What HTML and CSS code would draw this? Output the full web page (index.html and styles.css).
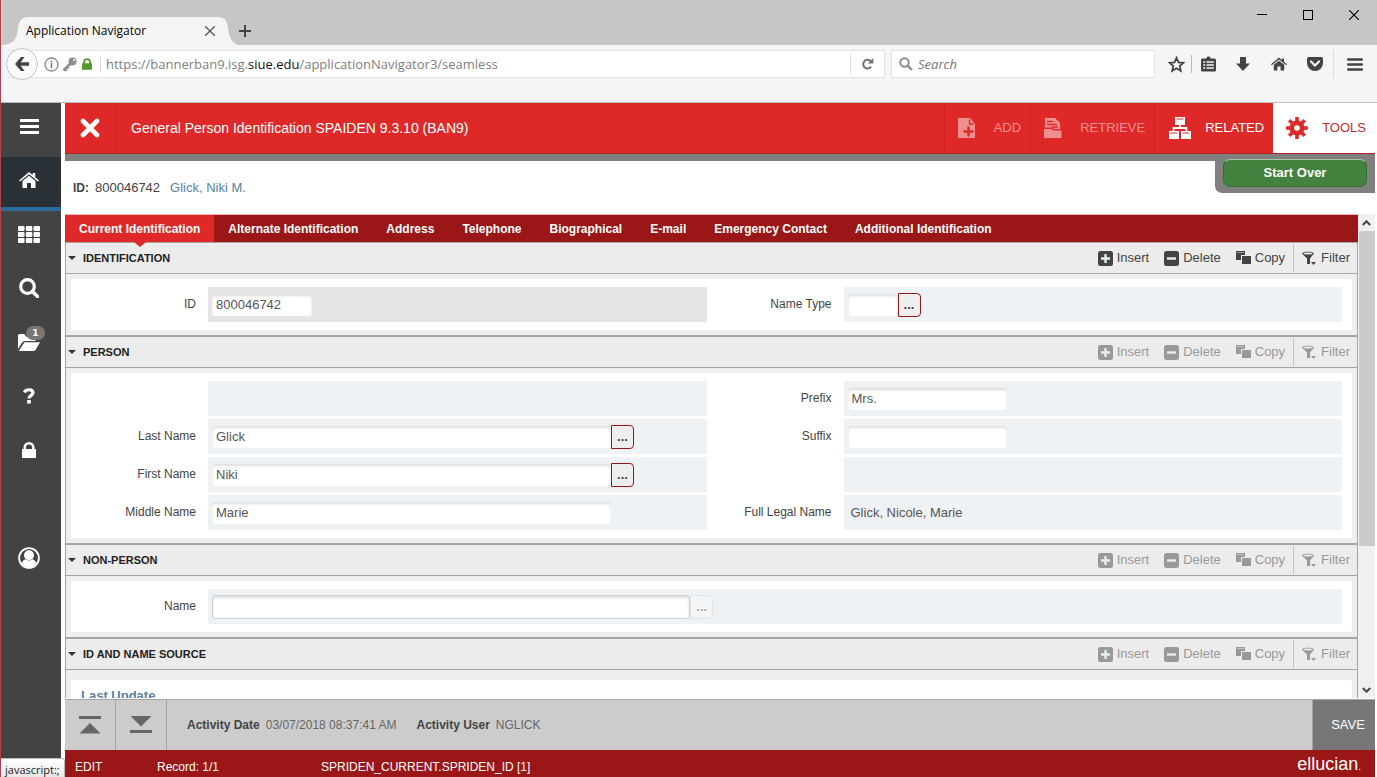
FILE: index.html
```html
<!DOCTYPE html>
<html lang="en">
<head>
<meta charset="utf-8">
<title>Application Navigator</title>
<link rel="stylesheet" href="styles.css">
</head>
<body>
<svg class="sprite" aria-hidden="true">
  <symbol id="i-insert" viewBox="0 0 15 15"><rect width="15" height="15" rx="2.5" fill="currentColor"/><path d="M7.5 3v9M3 7.5h9" stroke="#ececec" stroke-width="2.4"/></symbol>
  <symbol id="i-delete" viewBox="0 0 15 15"><rect width="15" height="15" rx="2.5" fill="currentColor"/><path d="M3 7.5h9" stroke="#ececec" stroke-width="2.4"/></symbol>
  <symbol id="i-copy" viewBox="0 0 15 15"><path d="M0 0h9v4H5v5H0zM6 5h9v8H6z" fill="currentColor"/><path d="M1 1.500h7" stroke="#ececec" stroke-width=".5"/></symbol>
  <symbol id="i-filter" viewBox="0 0 15 15"><path d="M0 2.500C0 .3 12 .3 12 2.500L8 7.500V13H5V7.500z" fill="currentColor"/><ellipse cx="6" cy="2.500" rx="4.500" ry=".9" fill="#ececec"/><path d="M9 11h5l-2.500 3z" fill="currentColor"/></symbol>
  <symbol id="i-lock" viewBox="0 0 14 16"><path d="M0 7h1.500V5.500a5.500 5.500 0 0 1 11 0V7H14v9H0zM4 7h6V5.500a3 3 0 0 0-6 0z" fill="currentColor"/></symbol>
  <symbol id="i-house" viewBox="0 0 20 16"><path d="M10 0l3.600 3V1h2.600v4.200L20 8.400l-1 1.200L10 2.300 1 9.600 0 8.400z" fill="currentColor"/><path d="M10 3.800l6.500 5.200v7H12v-5H8v5H3.500V9z" fill="currentColor"/></symbol>
</svg>
<div class="window">
  <header class="titlebar">
    <div class="tab">
      <svg class="tab-shape" viewBox="0 0 236 28" preserveAspectRatio="none" aria-hidden="true"><path d="M0 28C14 28 16 20 17 11C18 3 21 0 29 0H215C224 0 226 3 227 11C228 20 231 28 240 28z" fill="#f5f5f5"/></svg>
      <span class="tab-title">Application Navigator</span>
      <button class="plain" aria-label="Close tab"><svg width="10" height="10" viewBox="0 0 10 10"><path d="M0 0l10 10M10 0L0 10" stroke="#555" stroke-width="1.300"/></svg></button>
    </div>
    <button class="plain new-tab" aria-label="New tab"><svg width="12" height="12" viewBox="0 0 12 12"><path d="M6 0v12M0 6h12" stroke="#444" stroke-width="2"/></svg></button>
    <div class="window-controls">
      <button class="plain" aria-label="Minimize"><svg width="10" height="10"><path d="M0 4.500h10" stroke="#000"/></svg></button>
      <button class="plain" aria-label="Maximize"><svg width="10" height="10"><rect x=".5" y=".5" width="9" height="9" fill="none" stroke="#000"/></svg></button>
      <button class="plain" aria-label="Close"><svg width="10" height="10"><path d="M0 0l10 10M10 0L0 10" stroke="#000" stroke-width="1.200"/></svg></button>
    </div>
  </header>

  <div class="toolbar">
    <div class="address">
      <button class="plain back" aria-label="Back"><svg width="16" height="14" viewBox="0 0 16 14"><path d="M7 0h3.500L6.700 5.200H15v3.600H6.700L10.500 14H7L1 7z" fill="#444"/></svg></button>
      <svg class="ic-info" width="15" height="15" viewBox="0 0 15 15"><circle cx="7.500" cy="7.500" r="6.500" fill="none" stroke="#888" stroke-width="1.300"/><path d="M7.500 6v5.200M7.500 3.500v1.700" stroke="#777" stroke-width="1.500"/></svg>
      <svg width="15" height="15" viewBox="0 0 15 15"><path d="M1.500 13.500L9 6" stroke="#8e8e8e" stroke-width="2.600"/><path d="M3 12l2 2M5 10l1.800 1.800" stroke="#8e8e8e" stroke-width="1.500"/><circle cx="10.500" cy="4.500" r="4" fill="#8e8e8e"/><circle cx="12" cy="3" r="1" fill="#fff"/></svg>
      <svg class="ic-secure" width="10" height="12"><use href="#i-lock"/></svg>
      <div class="url"><span>https://bannerban9.isg.</span><b>siue.edu</b><span>/applicationNavigator3/seamless</span></div>
      <button class="plain reload" aria-label="Reload"><svg width="13" height="12" viewBox="0 0 13 12"><path d="M9.500 3A4.300 4.300 0 1 0 10 8.700" fill="none" stroke="#707070" stroke-width="2"/><path d="M12.300 0v5.500H6.800z" fill="#707070"/></svg></button>
    </div>
    <label class="search">
      <svg width="14" height="14" viewBox="0 0 14 14"><circle cx="5.500" cy="5.500" r="4.200" fill="none" stroke="#8d8d8d" stroke-width="2"/><path d="M8.700 8.700L13 13" stroke="#8d8d8d" stroke-width="2.400"/></svg>
      <input type="text" placeholder="Search" aria-label="Search">
    </label>
    <div class="tools">
      <button class="plain star" aria-label="Bookmark"><svg width="17" height="17" viewBox="0 0 17 17"><path d="M8.500 1.800l2 4.500 4.900.5-3.700 3.200 1.100 4.900-4.300-2.600-4.300 2.600 1.100-4.900L1.600 6.800l4.900-.5z" fill="none" stroke="#444" stroke-width="1.800"/></svg></button>
      <button class="plain" aria-label="Library"><svg width="15" height="16" viewBox="0 0 15 16"><path d="M1.500 2.500H5L6.500.5h2L10 2.500h3.500q1.500 0 1.500 1.500v10q0 1.500-1.500 1.500h-12Q0 15.500 0 14V4q0-1.500 1.500-1.500z" fill="#444"/><path d="M2.200 6h2M5.500 6h7.300M2.200 9h2M5.500 9h7.300M2.200 12h2M5.500 12h7.300" stroke="#f5f5f5" stroke-width="1.600"/></svg></button>
      <button class="plain" aria-label="Downloads"><svg width="14" height="14" viewBox="0 0 14 14"><path d="M4 0h6v6.500h4L7 14 0 6.500h4z" fill="#444"/></svg></button>
      <button class="plain" aria-label="Home"><svg width="16" height="14" class="dark"><use href="#i-house"/></svg></button>
      <button class="plain" aria-label="Pocket"><svg width="16" height="14" viewBox="0 0 16 14"><path d="M1.500 0h13Q16 0 16 1.500V6A8 8 0 0 1 0 6V1.500Q0 0 1.500 0z" fill="#444"/><path d="M4 4.500l4 4 4-4" fill="none" stroke="#f5f5f5" stroke-width="2.200" stroke-linecap="round"/></svg></button>
      <button class="plain menu" aria-label="Menu"><svg width="16" height="13" viewBox="0 0 16 13"><path d="M1.200 1.500h13.600M1.200 6.500h13.600M1.200 11.500h13.600" stroke="#444" stroke-width="2.600" stroke-linecap="round"/></svg></button>
    </div>
  </div>

  <div class="app">
    <nav class="sidebar" aria-label="Main">
      <button class="plain side" aria-label="Menu"><svg width="19" height="16"><path d="M0 2.500h19M0 8.500h19M0 14.500h19" stroke="#fff" stroke-width="3"/></svg></button>
      <a href="#" class="side active" aria-label="Home"><svg width="20" height="16"><use href="#i-house"/></svg></a>
      <button class="plain side" aria-label="Applications"><svg width="22" height="17" viewBox="0 0 22 17"><g fill="#fff"><rect width="6.500" height="5" rx="1"/><rect x="7.800" width="6.500" height="5" rx="1"/><rect x="15.500" width="6.500" height="5" rx="1"/><rect y="6" width="6.500" height="5" rx="1"/><rect x="7.800" y="6" width="6.500" height="5" rx="1"/><rect x="15.500" y="6" width="6.500" height="5" rx="1"/><rect y="12" width="6.500" height="5" rx="1"/><rect x="7.800" y="12" width="6.500" height="5" rx="1"/><rect x="15.500" y="12" width="6.500" height="5" rx="1"/></g></svg></button>
      <button class="plain side" aria-label="Search"><svg width="20" height="20" viewBox="0 0 20 20"><circle cx="8.500" cy="8.500" r="6.800" fill="none" stroke="#fff" stroke-width="3.200"/><path d="M13.500 13.500l5 5" stroke="#fff" stroke-width="3.600" stroke-linecap="round"/></svg></button>
      <button class="plain side" aria-label="Recently opened">
        <span class="folder"><svg width="22" height="17" viewBox="0 0 22 17"><path d="M0 15V1.500Q0 0 1.500 0H6q1.500 0 1.500 2.500H16q1.500 0 1.500 1.500v3H7Q5 7 3.800 9L0 15z" fill="#fff"/><path d="M6.500 8.200H22L17.500 16q-.6 1-2 1H.8z" fill="#fff"/></svg><span class="badge">1</span></span>
      </button>
      <button class="plain side" aria-label="Help"><svg width="12" height="16" viewBox="0 0 12 16"><path d="M1.500 4.500C2.500.8 10 .8 10 4.800 10 7.500 6 7.300 6 10.500" fill="none" stroke="#fff" stroke-width="3.200"/><rect x="4.200" y="12" width="3.600" height="3.600" fill="#fff"/></svg></button>
      <button class="plain side" aria-label="Sign out"><svg width="14" height="16"><use href="#i-lock"/></svg></button>
      <button class="plain side account" aria-label="Account"><svg width="22" height="22" viewBox="0 0 22 22"><circle cx="11" cy="11" r="9.900" fill="none" stroke="#fff" stroke-width="1.800"/><circle cx="11" cy="8.300" r="5" fill="#fff"/><path d="M3.800 16.500Q4.500 13 7.500 12.300q3.500 2.600 7 0 3 .7 3.700 4.200-3 3.700-7.200 3.700t-7.200-3.700z" fill="#fff"/></svg></button>
    </nav>

    <main class="page">
      <div class="page-head">
        <button class="plain close" aria-label="Close form"><svg width="20" height="20" viewBox="0 0 20 20"><path d="M3 3l14 14M17 3L3 17" stroke="#fff" stroke-width="4.600" stroke-linecap="round"/></svg></button>
        <h1>General Person Identification SPAIDEN 9.3.10 (BAN9)</h1>
        <button class="plain act" disabled><svg width="18" height="22" viewBox="0 0 18 22"><path d="M0 1h12l5 6v14H0z" fill="#f08f8f"/><path d="M11.500 2.500V7h4" fill="none" stroke="#df2828" stroke-width="1.300"/><path d="M10.500 9.500v10M5.500 14.500h10" stroke="#df2828" stroke-width="2.400"/></svg>ADD</button>
        <button class="plain act" disabled><svg width="18" height="22" viewBox="0 0 18 22"><path d="M1 1h10l5 5v6H10L8.500 10.500H1z" fill="#f08f8f"/><path d="M3 4.500h6M3 7.500h10M8 10h6" stroke="#df2828" stroke-width="1.300"/><path d="M0 12h7.500L9 13.500h8.500V21H0z" fill="#f08f8f"/></svg>RETRIEVE</button>
        <button class="plain act related"><svg width="22" height="22" viewBox="0 0 22 22"><path d="M6 0h10v8H6zM0 14h10v8H0zM12 14h10v8H12z" fill="#fff"/><path d="M11 8v3M4.500 14v-3h13v3" fill="none" stroke="#fff" stroke-width="1.800"/><path d="M7.500 2h7M1.500 16h7M13.500 16h7" stroke="#df2828" stroke-width="1.200"/></svg>RELATED</button>
        <button class="plain act tools-btn"><svg width="22" height="22" viewBox="0 0 22 22"><circle cx="11" cy="11" r="5.200" fill="none" stroke="#df2828" stroke-width="4.800"/><g stroke="#df2828" stroke-width="3.600"><path d="M11 0v4M11 18v4M0 11h4M18 11h4M3.200 3.200L6 6M16 16l2.800 2.800M3.200 18.800L6 16M16 6l2.800-2.800"/></g></svg>TOOLS</button>
      </div>
      <div class="key-block">
        <b>ID:</b><span>800046742</span><a href="#">Glick, Niki M.</a>
        <div class="start"><button>Start Over</button></div>
      </div>

      <div class="scroll">
        <div class="content">
          <div class="tabs" role="tablist">
            <button role="tab" class="current" aria-selected="true">Current Identification</button>
            <button role="tab">Alternate Identification</button>
            <button role="tab">Address</button>
            <button role="tab">Telephone</button>
            <button role="tab">Biographical</button>
            <button role="tab">E-mail</button>
            <button role="tab">Emergency Contact</button>
            <button role="tab">Additional Identification</button>
          </div>

          <section class="section">
            <div class="section-head">
              <h2>IDENTIFICATION</h2>
              <button><svg><use href="#i-insert"/></svg>Insert</button><button><svg><use href="#i-delete"/></svg>Delete</button><button><svg><use href="#i-copy"/></svg>Copy</button><button class="filter"><svg><use href="#i-filter"/></svg>Filter</button>
            </div>
            <div class="section-body"><div class="card">
              <label for="id">ID</label><div class="cell focus"><input id="id" class="w-sm" value="800046742"></div>
              <label for="nametype">Name Type</label><div class="cell"><input id="nametype" class="w-xs"><button class="more" aria-label="Look up name type">...</button></div>
            </div></div>
          </section>

          <section class="section inactive">
            <div class="section-head">
              <h2>PERSON</h2>
              <button><svg><use href="#i-insert"/></svg>Insert</button><button><svg><use href="#i-delete"/></svg>Delete</button><button><svg><use href="#i-copy"/></svg>Copy</button><button class="filter"><svg><use href="#i-filter"/></svg>Filter</button>
            </div>
            <div class="section-body"><div class="card">
              <span></span><div class="cell"></div>
              <label for="prefix">Prefix</label><div class="cell"><input id="prefix" class="w-md" value="Mrs."></div>
              <label for="last">Last Name</label><div class="cell"><input id="last" class="w-lg" value="Glick"><button class="more" aria-label="Look up last name">...</button></div>
              <label for="suffix">Suffix</label><div class="cell"><input id="suffix" class="w-md"></div>
              <label for="first">First Name</label><div class="cell"><input id="first" class="w-lg" value="Niki"><button class="more" aria-label="Look up first name">...</button></div>
              <span></span><div class="cell"></div>
              <label for="middle">Middle Name</label><div class="cell"><input id="middle" class="w-lg" value="Marie"></div>
              <label for="legal">Full Legal Name</label><div class="cell"><output id="legal">Glick, Nicole, Marie</output></div>
            </div></div>
          </section>

          <section class="section inactive">
            <div class="section-head">
              <h2>NON-PERSON</h2>
              <button><svg><use href="#i-insert"/></svg>Insert</button><button><svg><use href="#i-delete"/></svg>Delete</button><button><svg><use href="#i-copy"/></svg>Copy</button><button class="filter"><svg><use href="#i-filter"/></svg>Filter</button>
            </div>
            <div class="section-body"><div class="card">
              <label for="org">Name</label><div class="cell wide"><input id="org" class="w-xl"><button class="more" disabled aria-label="Look up name">...</button></div>
            </div></div>
          </section>

          <section class="section inactive">
            <div class="section-head">
              <h2>ID AND NAME SOURCE</h2>
              <button><svg><use href="#i-insert"/></svg>Insert</button><button><svg><use href="#i-delete"/></svg>Delete</button><button><svg><use href="#i-copy"/></svg>Copy</button><button class="filter"><svg><use href="#i-filter"/></svg>Filter</button>
            </div>
            <div class="section-body source"><div class="card"><h3>Last Update</h3></div></div>
          </section>
        </div>
        <div class="scrollbar">
          <button class="plain" aria-label="Scroll up"><svg width="9" height="6"><path d="M.8 5l3.700-3.700L8.200 5" fill="none" stroke="#444" stroke-width="2"/></svg></button>
          <div class="track"><div class="thumb"></div></div>
          <button class="plain" aria-label="Scroll down"><svg width="9" height="6"><path d="M.8 1l3.700 3.700L8.200 1" fill="none" stroke="#444" stroke-width="2"/></svg></button>
        </div>
      </div>

      <footer class="record">
        <button class="plain step" aria-label="Previous section"><svg width="22" height="18"><path d="M0 1.500h22" stroke="#666" stroke-width="3"/><path d="M11 7l10.500 10.500H.5z" fill="#666"/></svg></button>
        <button class="plain step" aria-label="Next section"><svg width="22" height="18"><path d="M.5 0h21L11 10.500z" fill="#666"/><path d="M0 15.500h22" stroke="#666" stroke-width="3"/></svg></button>
        <dl><dt>Activity Date</dt><dd>03/07/2018 08:37:41 AM</dd><dt>Activity User</dt><dd>NGLICK</dd></dl>
        <button class="plain save">SAVE</button>
      </footer>
      <div class="status"><span class="mode">EDIT</span><span class="rec">Record: 1/1</span><span>SPRIDEN_CURRENT.SPRIDEN_ID [1]</span><span class="brand">ellucian<small>.</small></span></div>
    </main>
  </div>
  <div class="link-hint">javascript:;</div>
</div>
</body>
</html>
```
FILE: styles.css
```css
* { box-sizing: border-box; }
body { margin: 0; font: 13px/16px "Liberation Sans", Arial, sans-serif; color: #444; }
h1, h2, h3, dl, dd { margin: 0; }
svg { display: block; flex: none; }
button, input { font: inherit; color: inherit; }
button { white-space: nowrap; }
.sprite { position: absolute; width: 0; height: 0; }
.plain { display: flex; align-items: center; justify-content: center; padding: 0; border: 0; background: none; }
.window { position: relative; display: flex; flex-direction: column; height: 100vh; overflow: hidden; border-left: 1px solid #b0404a; background: #fff; }

.titlebar { display: flex; height: 45px; background: #c6c6c6; font-family: "Open Sans", sans-serif; font-size: 12px; color: #000; }
.tab { position: relative; display: flex; justify-content: space-between; align-items: center; width: 236px; height: 28px; margin-top: 17px; padding: 0 22px 0 25px; }
.tab-shape { position: absolute; inset: 0; width: 100%; height: 100%; }
.tab-title, .tab button { position: relative; }
.new-tab { width: 16px; height: 28px; margin-top: 17px; }
.window-controls { display: flex; gap: 36px; height: 30px; margin-left: auto; padding-right: 18px; }

.toolbar { display: flex; flex: none; align-items: flex-start; height: 58px; padding: 5px 1px 0 5px; border-bottom: 1px solid #bcbcbc; background: #f5f5f5; font: 13px/18px "Open Sans", sans-serif; }
.address { display: flex; flex: 1; align-items: center; height: 28px; margin-right: 6px; border: 1px solid #e2e2e2; border-left: 0; background: linear-gradient(#fff, #fff) no-repeat 16px 0; }
.back { width: 32px; height: 32px; border: 1px solid #c4c4c4; border-radius: 50%; background: #fafafa; }
.ic-info { margin: 0 3px 0 6px; }
.ic-secure { margin: 0 8px 0 5px; color: #4f9a2b; }
.url { flex: 1; padding-left: 5px; border-left: 1px solid #ddd; color: #808080; }
.url b { color: #111; font-weight: 400; }
.reload { width: 34px; height: 20px; border-left: 1px solid #ddd; }
.search { display: flex; align-items: center; gap: 5px; width: 264px; height: 28px; padding: 0 7px; border: 1px solid #e2e2e2; background: #fff; }
.search input { flex: 1; min-width: 0; padding: 0; border: 0; outline: 0; background: none; }
.search input::placeholder { color: #777; font-style: italic; opacity: 1; }
.tools { display: flex; align-items: center; height: 28px; margin-left: 6px; }
.tools .plain { width: 36px; height: 28px; }
.tools .star { width: 31px; height: 18px; border-right: 1px solid #bbb; }
.tools .star + .plain { width: 33px; }
.tools .plain.menu { width: 43px; border-left: 1px solid #ddd; }
.dark { color: #444; }

.app { display: flex; flex: 1; min-height: 0; }
.sidebar { display: flex; flex: none; flex-direction: column; width: 60px; margin-right: 4px; background: #434343; }
.side { display: flex; align-items: center; justify-content: center; width: 100%; height: 54px; padding: 0 4px 8px 0; color: #fff; }
.side.active { padding-bottom: 4px; border-bottom: 4px solid #2c6c9a; background: #293036; }
.side.account { margin-top: 54px; }
.folder { position: relative; }
.badge { position: absolute; top: -8px; left: 8px; width: 19px; border-radius: 7px; background: #777; font: bold 9px/14px "DejaVu Sans", sans-serif; text-align: center; }

.page { display: flex; flex: 1; flex-direction: column; min-width: 0; padding-right: 2px; }
.page-head { display: flex; flex: none; height: 51px; border-bottom: 1px solid #b32626; background: #df2828; color: #fff; }
.close { width: 51px; border-right: 1px solid #cd2222; }
.page-head h1 { flex: 1; padding: 0 15px; font-size: 14px; font-weight: 400; line-height: 50px; }
.act { gap: 18px; padding: 0 9px 0 13px; border-left: 1px solid #cd2222; font-size: 13px; color: #f08f8f; }
.act.related { gap: 14px; padding-left: 14px; color: #fff; }
.act.tools-btn { gap: 14px; border: 0; background: #fff; color: #c82a2a; }
.key-block { position: relative; display: flex; flex: none; align-items: center; gap: 6px; height: 60px; padding: 0 8px; border-top: 7px solid #808080; }
.key-block b { font-size: 12px; }
.key-block a { margin-left: 4px; color: #5b7f9f; text-decoration: none; }
.start { position: absolute; top: -7px; right: 0; padding: 5px 8px 6px; border-bottom-left-radius: 7px; background: #808080; }
.start button { width: 144px; height: 28px; padding: 0; border: 1px solid #35702f; border-top-color: #a5c4a2; border-radius: 7px; background: #43823f; font-weight: 700; color: #fff; }

.scroll { display: flex; flex: 1; min-height: 0; margin-bottom: 1px; }
.content { flex: 1; min-width: 0; overflow: hidden; }
.tabs { display: flex; height: 28px; border-top: 1px solid #f0b0b0; background: #9b1616; }
.tabs button { position: relative; padding: 0 14px; border: 0; background: none; font-size: 12px; font-weight: 700; color: #fff; }
.tabs .current { background: #df2828; }
.tabs .current::after { content: ""; position: absolute; z-index: 1; top: 100%; left: 50%; margin-left: -6px; border: 6px solid transparent; border-top: 5px solid #df2828; border-bottom: 0; }
.section { border: 1px solid #a5a5a5; border-width: 2px 1px 0; background: #eee; }
.tabs + .section { border-top-width: 1px; }
.section-head { display: flex; align-items: center; height: 31px; padding: 0 7px 0 2px; border-bottom: 1px solid #a5a5a5; background: #ececec; }
.section-head h2 { display: flex; align-items: center; gap: 7px; flex: 1; font-size: 11px; color: #222; }
.section-head h2::before { content: ""; border: 4px solid transparent; border-top-color: #333; border-bottom: 0; }
.section-head button { display: flex; align-items: center; gap: 4px; height: 28px; margin-left: 15px; padding: 0; border: 0; background: none; }
.section-head .filter { margin-left: 8px; padding-left: 8px; border-left: 1px solid #c4c4c4; }
.section-head svg { width: 15px; height: 15px; }
.inactive .section-head button { color: #999; }
.section-body { padding: 5px; }
.section-body.source { padding-top: 10px; }
.card { display: grid; grid-template-columns: 137px 1fr 137px 1fr; row-gap: 3px; padding: 8px 10px 8px 0; border-radius: 2px; background: #fff; }
.card label { padding-right: 12px; font-size: 12px; line-height: 35px; text-align: right; }
.cell { display: flex; align-items: center; min-width: 0; height: 35px; padding-left: 4px; background: #eef2f5; }
.cell.focus { background: #e5e5e5; }
.cell.wide { grid-column: span 3; }
.cell input { min-width: 0; height: 22px; padding: 0 4px; border: 0; border-radius: 3px; outline: 0; background: #fff; box-shadow: inset 0 2px 3px #ddd; color: #555; }
.cell .w-xs { width: 50px; }
.cell .w-sm { width: 100px; }
.cell .w-md { width: 159px; }
.cell .w-lg { width: 399px; }
.cell .w-xl { width: 478px; height: 24px; border: 1px solid #ccd3d8; }
.cell output { padding-left: 3px; color: #555; }
.more { width: 23px; height: 24px; padding: 0; border: 1px solid #9b1616; border-radius: 0 4px 4px 0; background: #eee; font-weight: 700; }
.more:disabled { border-color: #e2e4e6; background: #f3f4f5; color: #aaa; }
.source .card { display: block; padding: 8px 10px; }
.card h3 { font-size: 13px; color: #5b7f9f; }
.scrollbar { display: flex; flex: none; flex-direction: column; width: 17px; background: #f0f0f0; }
.scrollbar .plain { height: 17px; }
.track { flex: 1; padding-left: 1px; }
.thumb { height: 70%; background: #cbcbcb; }

.record { display: flex; flex: none; height: 51px; border-top: 1px solid #a5a5a5; background: #ccc; }
.step { width: 51px; border-right: 1px solid #a5a5a5; }
.record dl { display: flex; flex: 1; align-items: center; padding-left: 20px; font-size: 12px; }
.record dt { font-weight: 700; }
.record dd { margin: 0 20px 0 6px; color: #666; }
.save { width: 63px; padding-left: 8px; border-left: 1px solid #a5a5a5; background: #777; font-size: 13px; color: #fff; }
.status { display: flex; flex: none; align-items: center; height: 27px; padding: 6px 14px 0 10px; background: #9b1616; font-size: 12px; color: #fff; line-height: 18px; }
.mode { width: 82px; }
.rec { width: 164px; }
.brand { margin-left: auto; padding-bottom: 2px; font-size: 18px; }
.brand small { font-size: 10px; }
.link-hint { position: absolute; bottom: 0; left: 0; padding: 3px 4px 0; border: 1px solid #bbb; border-width: 1px 1px 0 0; border-radius: 0 3px 0 0; background: linear-gradient(#fff, #e8e8e8); font: 11px/15px "Open Sans", sans-serif; color: #222; }
```
